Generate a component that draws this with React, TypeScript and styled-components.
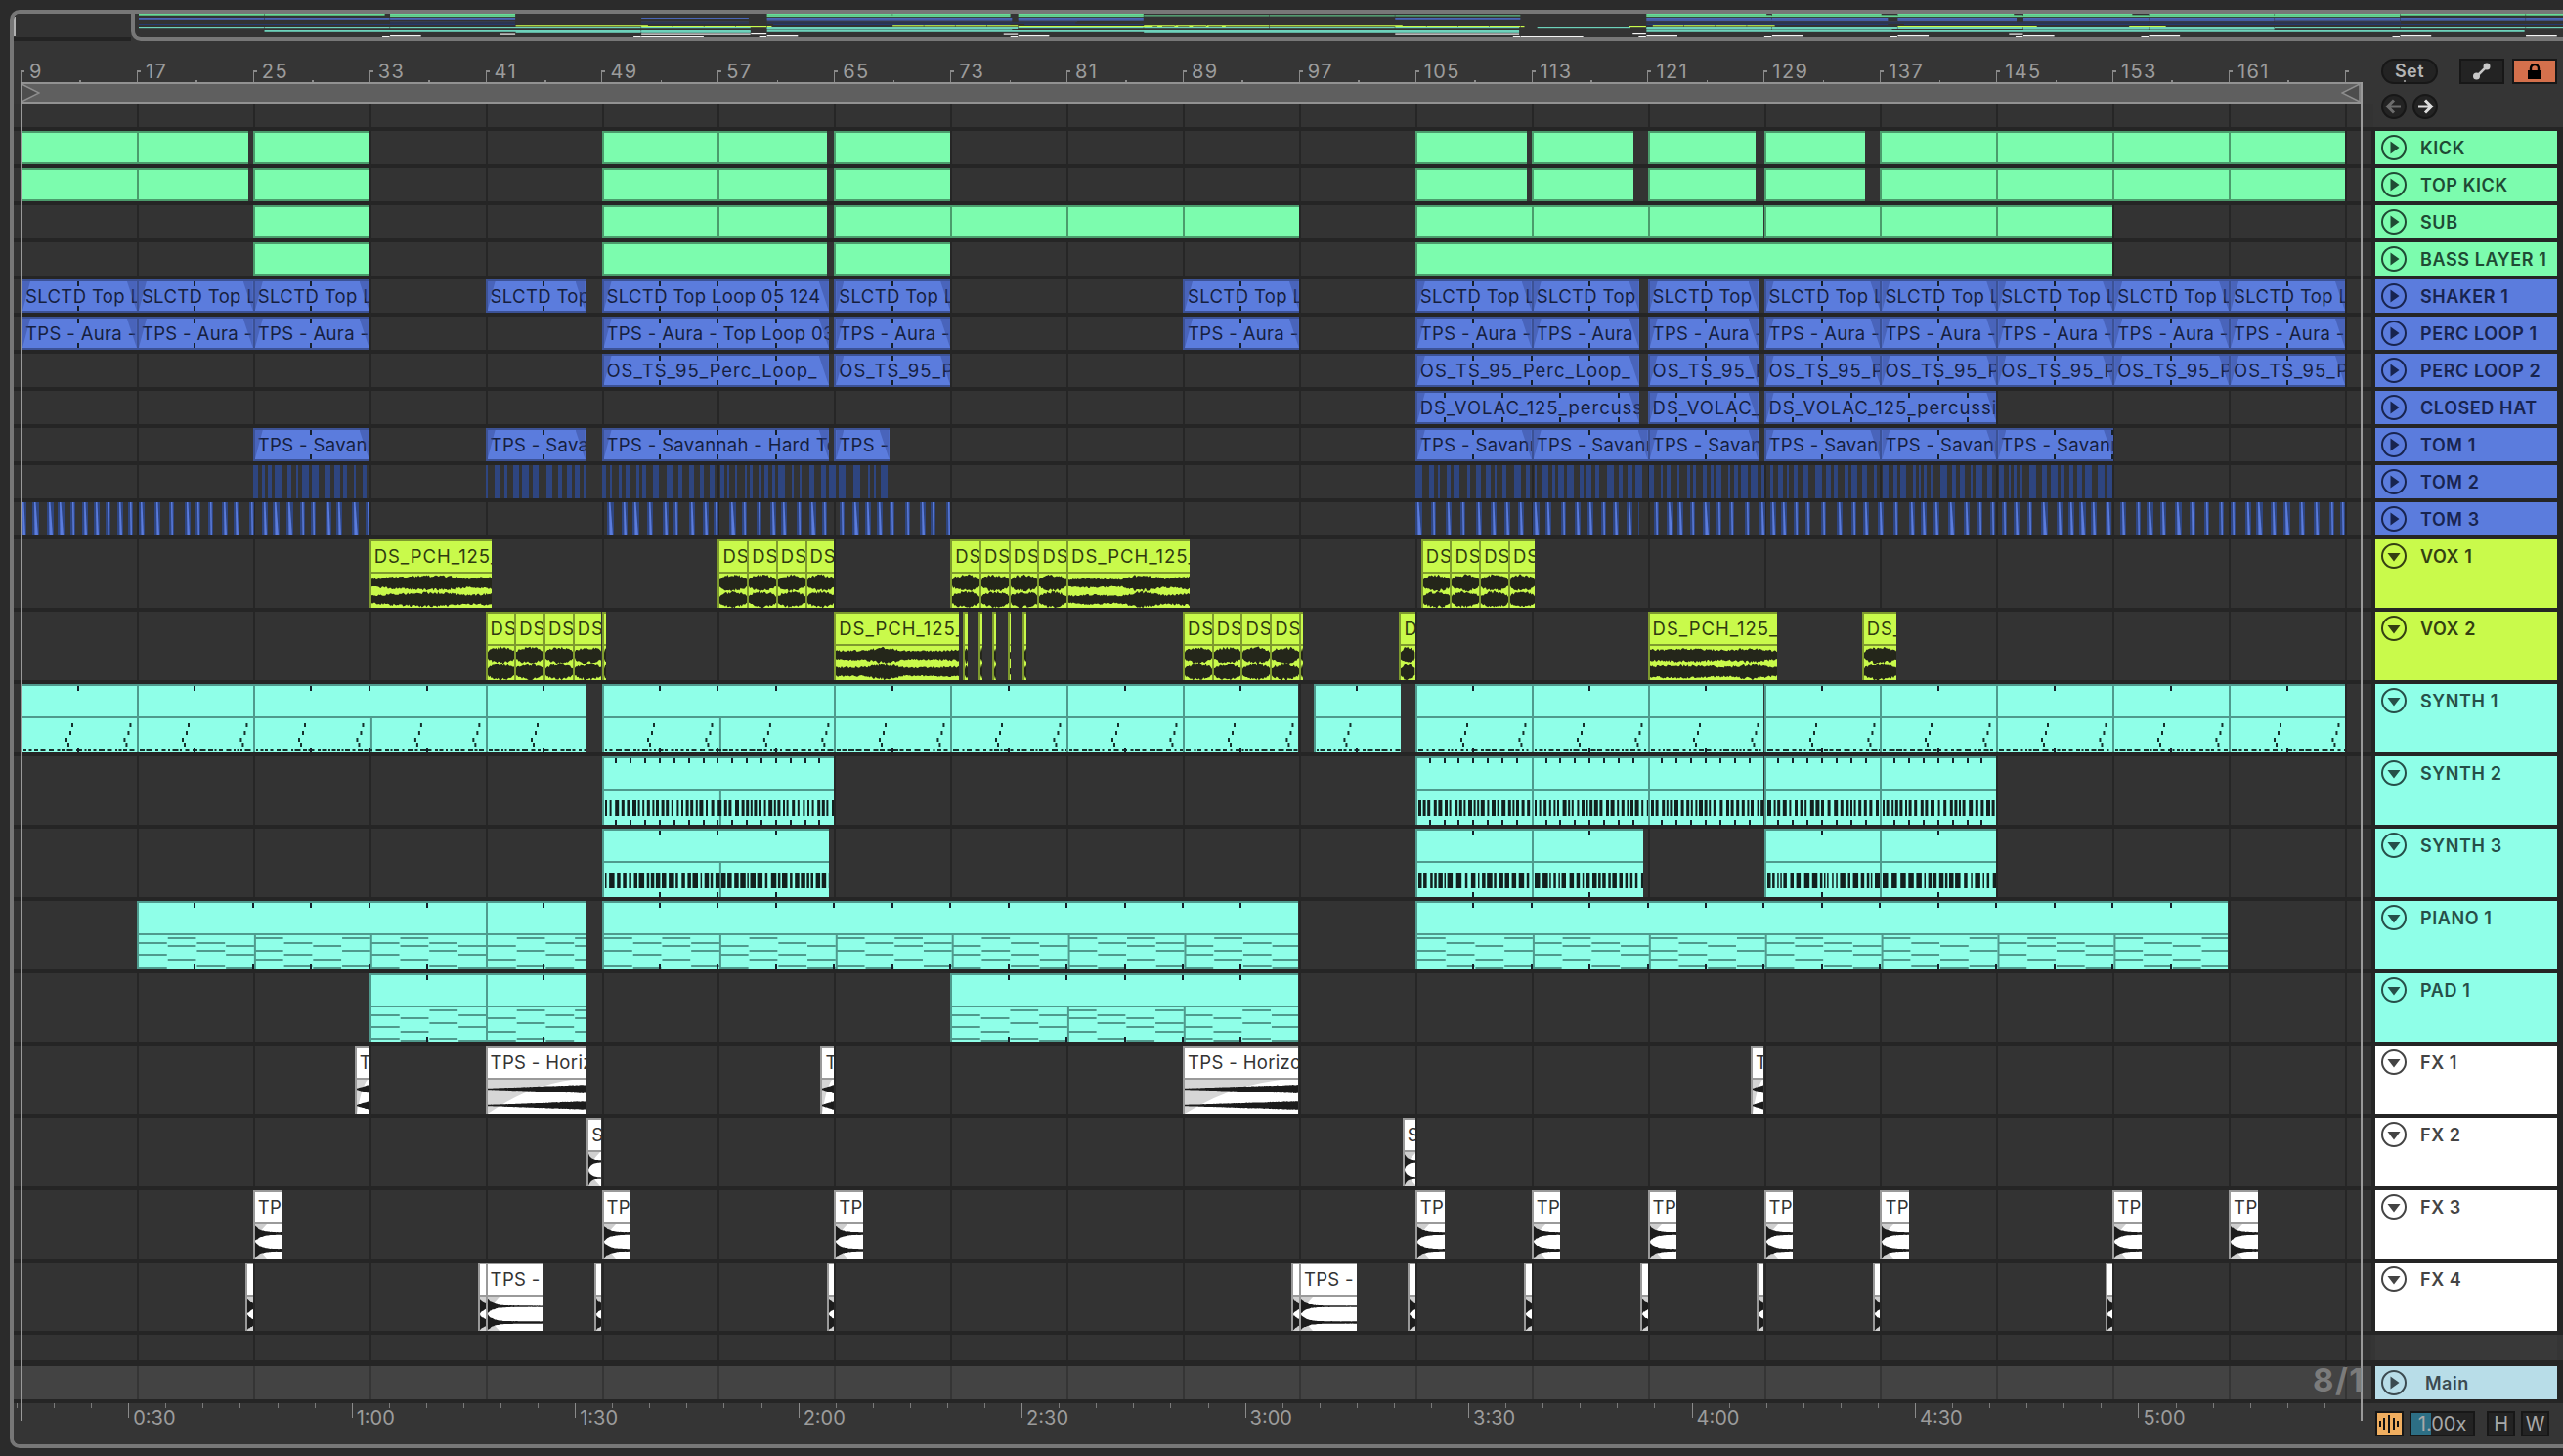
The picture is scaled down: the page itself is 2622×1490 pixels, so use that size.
import React from 'react';
import styled, { createGlobalStyle } from 'styled-components';

const BAR = 14.8625;
const FONT = `Inter, "Noto Sans", sans-serif`;
const laneX = (bar: number) => 7 + (bar - 9) * BAR;
const p = (v: number) => 9 + (v * 1.6722 - 21) / BAR;
const rp = (v: number) => 9 + (v - 21) / BAR;

type Tone = 'green' | 'blue' | 'yellow' | 'teal' | 'white' | 'tom2' | 'tom3';
type ClipDef = [number, number, string?];
type Body = 'none' | 'wave' | 'rise' | 'decay' | 'hit' | 'dots' | 'bars' | 'denseBars' | 'dashes';
interface Track {
  name: string;
  tone: Tone;
  tall?: boolean;
  body?: Body;
  clips: ClipDef[];
  tickStep?: number;
  tickOffset?: number;
}

const tones: Record<Tone, { fill: string; border: string; text: string; head: string; headText: string }> = {
  green: { fill: '#7cfcae', border: '#4b9c6c', text: '#1d3a2a', head: '#7cfcae', headText: '#1f4a34' },
  blue: { fill: '#5b7cdd', border: '#3c5296', text: '#161f3f', head: '#5b7cdd', headText: '#18244f' },
  yellow: { fill: '#c9fa4b', border: '#7e9a2e', text: '#2f3a10', head: '#c9fa4b', headText: '#343f12' },
  teal: { fill: '#8fffe8', border: '#4f9a8d', text: '#1f3f39', head: '#8fffe8', headText: '#264f49' },
  white: { fill: '#ffffff', border: '#9a9a9a', text: '#333333', head: '#ffffff', headText: '#444444' },
  tom2: { fill: 'transparent', border: 'transparent', text: '#000', head: '#5b7cdd', headText: '#18244f' },
  tom3: { fill: 'transparent', border: 'transparent', text: '#000', head: '#5b7cdd', headText: '#18244f' },
};

const seq = (from: number, to: number, title?: string, step = 8): ClipDef[] => {
  const out: ClipDef[] = [];
  for (let b = from; b < to; b += step) out.push([b, Math.min(b + step, to), title]);
  return out;
};

const SLC = 'SLCTD Top Loop 05 124';
const AUR = 'TPS - Aura - Top Loop 03';
const OST = 'OS_TS_95_Perc_Loop_';
const VOL = 'DS_VOLAC_125_percussion';
const SAV = 'TPS - Savannah - Hard Tom';
const PCH = 'DS_PCH_125_vox';
const HOR = 'TPS - Horizon';
const TPI = 'TPS - Impact';

const kickClips: ClipDef[] = [
  [9, 17], [17, p(152)], [25, 33], [49, 57], [57, p(506)], [65, 73], [105, p(934)], [113, p(999)],
  [121, p(1074)], [129, p(1141)], [137, 145], [145, 153], [153, 161], [161, 169],
];

const tracks: Track[] = [
  { name: 'KICK', tone: 'green', clips: kickClips },
  { name: 'TOP KICK', tone: 'green', clips: kickClips },
  { name: 'SUB', tone: 'green', clips: [[25, 33], [49, 57], [57, p(506)], [65, 73], [73, 81], [81, 89], [89, 97], ...seq(105, 153)] },
  { name: 'BASS LAYER 1', tone: 'green', clips: [[25, 33], [49, p(506)], [65, 73], [105, 153]] },
  {
    name: 'SHAKER 1', tone: 'blue',
    clips: [...seq(9, 33, SLC), [41, p(358), SLC], [49, p(507), SLC], [65, 73, SLC], [89, 97, SLC], [105, 113, SLC], [113, 120.4, SLC], [121, 128.6, SLC], ...seq(129, 169, SLC)],
  },
  {
    name: 'PERC LOOP 1', tone: 'blue',
    clips: [...seq(9, 33, AUR), [49, p(507), AUR], [65, 73, AUR], [89, 97, AUR], [105, 113, AUR], [113, 120.4, AUR], [121, 128.6, AUR], ...seq(129, 169, AUR)],
  },
  {
    name: 'PERC LOOP 2', tone: 'blue',
    clips: [[49, p(507), OST], [65, 73, OST], [105, 120.4, OST], [121, 128.6, OST], ...seq(129, 169, OST)],
  },
  { name: 'CLOSED HAT', tone: 'blue', tickOffset: 3, clips: [[105, 120.4, VOL], [121, 128.6, VOL], [129, 145, VOL]] },
  {
    name: 'TOM 1', tone: 'blue',
    clips: [[25, 33, SAV], [41, p(358), SAV], [49, p(507), SAV], [65, p(544), SAV], [105, 113, SAV], [113, 121, SAV], [121, 128.6, SAV], [129, 137, SAV], [137, 145, SAV], [145, p(1293), SAV]],
  },
  { name: 'TOM 2', tone: 'tom2', clips: [[25, 33], [41, p(358)], [49, p(543)], [105, p(1293)]] },
  { name: 'TOM 3', tone: 'tom3', clips: [[9, 33], [49.4, p(506)], [65.4, 73], [105, 120.4], [121.4, 169]] },
  {
    name: 'VOX 1', tone: 'yellow', tall: true, body: 'wave',
    clips: [[33, p(301), PCH], ...seq(57, 65, PCH, 2), ...seq(73, 81, PCH, 2), [81, p(728), PCH], ...seq(105.4, 113.2, PCH, 2)],
  },
  {
    name: 'VOX 2', tone: 'yellow', tall: true, body: 'wave',
    clips: [
      ...seq(41, p(371), PCH, 2), [65, rp(981), PCH], [rp(985), rp(990), PCH], [rp(1001), rp(1005), PCH], [rp(1015), rp(1019), PCH], [rp(1031), rp(1034), PCH], [rp(1046), rp(1050), PCH],
      ...seq(89, p(797), PCH, 2), [p(856), 105, PCH], [121, p(1087), PCH], [p(1139), p(1160), PCH],
    ],
  },
  {
    name: 'SYNTH 1', tone: 'teal', tall: true, body: 'dots',
    clips: [[9, 17], [17, 25], [25, 41], [41, p(359)], [49, 65], [65, 73], [73, 81], [81, 89], [89, p(794)], [p(804), p(857)], ...seq(105, 169)],
  },
  { name: 'SYNTH 2', tone: 'teal', tall: true, body: 'bars', tickStep: 1, clips: [[49, 65], ...seq(105, 145)] },
  { name: 'SYNTH 3', tone: 'teal', tall: true, body: 'denseBars', clips: [[49, p(507)], [105, 113], [113, p(1005)], [129, 137], [137, 145]] },
  { name: 'PIANO 1', tone: 'teal', tall: true, body: 'dashes', clips: [[17, 41], [41, p(359)], [49, p(794)], [105, p(1363)]] },
  { name: 'PAD 1', tone: 'teal', tall: true, body: 'dashes', clips: [[33, 41], [41, p(359)], [73, p(794)]] },
  {
    name: 'FX 1', tone: 'white', tall: true, body: 'rise',
    clips: [[p(217), 33, HOR], [41, p(359), HOR], [p(502), 65, HOR], [89, p(794), HOR], [p(1071), 129, HOR]],
  },
  { name: 'FX 2', tone: 'white', tall: true, body: 'hit', clips: [[p(359), 49, 'SFX'], [p(858), 105, 'SFX']] },
  {
    name: 'FX 3', tone: 'white', tall: true, body: 'decay',
    clips: [25, 49, 65, 105, 113, 121, 129, 137, 153, 161].map((b): ClipDef => [b, b + 2, TPI]),
  },
  {
    name: 'FX 4', tone: 'white', tall: true, body: 'decay',
    clips: [
      [24.5, 25], [40.5, 41], [41, 45, TPI], [48.5, 49], [64.5, 65], [96.5, 97], [97, 101, TPI], [104.5, 105], [112.5, 113], [120.5, 121], [128.5, 129], [136.5, 137], [152.5, 153],
    ],
  },
];

const rng = (seed: number) => {
  let s = (seed * 7919 + 17) % 2147483647;
  return () => {
    s = (s * 16807) % 2147483647;
    return s / 2147483647;
  };
};

const GlobalStyle = createGlobalStyle`
  html, body { margin: 0; padding: 0; background: #2b2b2b; }
  body { width: 2622px; height: 1490px; overflow: hidden; font-family: ${FONT}; }
`;

const Page = styled.div`
  width: 2622px;
  height: 1490px;
  box-sizing: border-box;
  padding: 10px 0 8px 10px;
  background: #2b2b2b;
`;

const Frame = styled.div`
  height: 100%;
  box-sizing: border-box;
  position: relative;
  display: flex;
  flex-direction: column;
  border: 4px solid #777777;
  border-right: 0;
  border-radius: 10px 0 0 10px;
  background: #353535;
  overflow: hidden;
`;

const OverviewRow = styled.div`
  height: 28px;
  flex: none;
  display: flex;
`;

const OverviewLeft = styled.div`
  width: 120px;
  flex: none;
  box-sizing: border-box;
  padding: 3px 0 1px;
  background: #323232;
  border-bottom: 4px solid #232323;
`;

const OverviewEdge = styled.div`
  width: 1.5px;
  height: 100%;
  background: #b0b0b0;
`;

const OverviewWindow = styled.div`
  flex: 1;
  box-sizing: border-box;
  border-left: 4px solid #777777;
  border-bottom: 4px solid #777777;
  border-bottom-left-radius: 10px;
  background: #333333;
  overflow: hidden;

  svg { display: block; }
`;

const TopSection = styled.div`
  height: 88px;
  flex: none;
  display: flex;
`;

const TimelineHead = styled.div`
  flex: 1;
  min-width: 0;
  display: flex;
  flex-direction: column;
`;

const BarRuler = styled.div`
  height: 42px;
  flex: none;
  display: flex;
  align-items: flex-end;
  padding-left: 7px;
  background: #353535;
`;

const BarCell = styled.div`
  width: ${BAR * 8}px;
  flex: none;
  height: 12px;
  box-sizing: border-box;
  position: relative;
  border-left: 1.5px solid #8a8a8a;

  &::before {
    content: '';
    position: absolute;
    left: 0;
    top: 0;
    width: 3px;
    height: 1.5px;
    background: #8a8a8a;
  }

  &::after {
    content: '';
    position: absolute;
    left: ${BAR * 4}px;
    bottom: 0;
    width: 1.5px;
    height: 2px;
    background: #8a8a8a;
  }
`;

const BarNumber = styled.span`
  position: absolute;
  left: 8px;
  bottom: 1px;
  font-size: 20px;
  letter-spacing: 1.4px;
  line-height: 20px;
  color: #9c9c9c;
`;

const LoopBar = styled.div`
  height: 22px;
  flex: none;
  box-sizing: border-box;
  margin: 0 13px 0 7px;
  display: flex;
  justify-content: space-between;
  background: #5f5f5f;
  border-top: 2px solid #929292;
  border-bottom: 2px solid #929292;

  svg { display: block; }
`;

const gridLines = (color: string) => `repeating-linear-gradient(
  90deg,
  transparent 0,
  transparent 7px,
  ${color} 7px,
  ${color} 9px,
  transparent 9px,
  transparent ${BAR * 8}px
)`;

const FillerLane = styled.div`
  height: 24px;
  flex: none;
  background-color: #333333;
  background-image: ${gridLines('#262626')};
`;

const ControlPanel = styled.div`
  width: 194px;
  flex: none;
  box-sizing: border-box;
  padding: 18px 6px 0 8px;
  display: flex;
  flex-direction: column;
  gap: 10px;
`;

const ControlLine = styled.div`
  display: flex;
  align-items: center;
  gap: 6px;
`;

const SetButton = styled.div`
  width: 58px;
  height: 26px;
  margin-right: 16px;
  box-sizing: border-box;
  border: 2px solid #171717;
  border-radius: 13px;
  background: #232323;
  color: #b4b4b4;
  font-size: 18px;
  font-weight: 600;
  letter-spacing: 0.5px;
  line-height: 22px;
  text-align: center;
`;

const SquareButton = styled.div<{ $on?: boolean }>`
  width: 46px;
  height: 26px;
  margin-left: ${(p) => (p.$on ? '2px' : '0')};
  box-sizing: border-box;
  display: flex;
  align-items: center;
  justify-content: center;
  border: 2px solid #171717;
  background: ${(p) => (p.$on ? '#d4704c' : '#232323')};
`;

const RoundButton = styled.div`
  width: 26px;
  height: 26px;
  box-sizing: border-box;
  display: flex;
  align-items: center;
  justify-content: center;
  border: 2px solid #171717;
  border-radius: 50%;
  background: #232323;
`;

const Separator = styled.div<{ $h: number }>`
  height: ${(p) => p.$h}px;
  flex: none;
  background: #252525;
`;

const Tracks = styled.div`
  display: flex;
  flex-direction: column;
  gap: 4px;
  flex: none;
  background: #252525;
`;

const TrackRow = styled.div<{ $h: number }>`
  height: ${(p) => p.$h}px;
  flex: none;
  display: flex;
  gap: 4px;
  padding-right: 6px;
  background: #252525;
`;

const Lane = styled.div<{ $main?: boolean }>`
  flex: 1;
  min-width: 0;
  position: relative;
  overflow: hidden;
  background-color: ${(p) => (p.$main ? '#434343' : '#333333')};
  background-image: ${(p) => gridLines(p.$main ? '#353535' : '#262626')};
`;

const Clip = styled.div<{ $tone: Tone; $tall?: boolean }>`
  position: absolute;
  top: 0;
  bottom: 0;
  box-sizing: border-box;
  display: flex;
  flex-direction: column;
  overflow: hidden;
  background: ${(p) => tones[p.$tone].fill};
  border-left: ${(p) => (p.$tone.startsWith('tom') ? '0' : `2px solid ${tones[p.$tone].border}`)};
  border-top: ${(p) => (p.$tone.startsWith('tom') ? '0' : `2px solid ${tones[p.$tone].border}`)};
  border-bottom: ${(p) => (p.$tall || p.$tone.startsWith('tom') ? '0' : `2px solid ${tones[p.$tone].border}`)};

  svg { display: block; }
`;

const ClipTitle = styled.div<{ $tone: Tone; $tall?: boolean; $wide?: boolean }>`
  flex: none;
  height: ${(p) => (p.$tall ? '31px' : '30px')};
  line-height: ${(p) => (p.$tall ? '31px' : '30px')};
  padding-left: 3px;
  font-size: 18.5px;
  letter-spacing: ${(p) => (p.$wide ? '0.95px' : '0.35px')};
  white-space: nowrap;
  overflow: hidden;
  color: ${(p) => tones[p.$tone].text};
`;

const ClipBodyBox = styled.div<{ $tone: Tone }>`
  flex: 1;
  min-height: 0;
  border-top: 2px solid ${(p) => tones[p.$tone].border};
  overflow: hidden;
`;

const Fade = styled.div<{ $side: 'left' | 'right' }>`
  position: absolute;
  top: 0;
  bottom: 0;
  ${(p) => p.$side}: 0;
  width: ${(p) => (p.$side === 'left' ? '8px' : '10px')};
  background: rgba(52, 72, 146, 0.45);
  clip-path: ${(p) => (p.$side === 'left' ? 'polygon(0 0, 100% 0, 0 100%)' : 'polygon(0 0, 100% 100%, 100% 0)')};
`;

const Tick = styled.div<{ $pos: 'top' | 'bottom' }>`
  position: absolute;
  ${(p) => p.$pos}: 0;
  width: 2px;
  height: 5px;
  background: #16202a;
`;

const TrackHeader = styled.div<{ $tone: Tone }>`
  width: 186px;
  flex: none;
  box-sizing: border-box;
  padding: 4px 0 0 6px;
  display: flex;
  gap: 14px;
  background: ${(p) => tones[p.$tone].head};
  color: ${(p) => tones[p.$tone].headText};

  svg { flex: none; display: block; }
`;

const TrackName = styled.span`
  font-size: 18px;
  font-weight: 600;
  letter-spacing: 0.6px;
  line-height: 27px;
  white-space: nowrap;
`;

const FillerRow = styled.div`
  height: 26px;
  flex: none;
  display: flex;
  gap: 4px;
  padding-right: 6px;
`;

const FillerHeader = styled.div`
  width: 186px;
  flex: none;
  background: #393939;
`;

const MainHeader = styled.div`
  width: 186px;
  flex: none;
  box-sizing: border-box;
  padding: 4px 0 0 6px;
  display: flex;
  gap: 19px;
  background: #b8dde8;
  color: #3c4a50;
`;

const MainName = styled.span`
  font-size: 18px;
  font-weight: 600;
  letter-spacing: 0.5px;
  line-height: 27px;
`;

const BottomBar = styled.div`
  height: 42px;
  flex: none;
  display: flex;
  background: #353535;
`;

const TimeRuler = styled.div`
  flex: 1;
  min-width: 0;
  display: flex;
  padding-left: 3px;
  overflow: hidden;
`;

const TimeCell = styled.div<{ $major: boolean }>`
  width: 38.08px;
  flex: none;
  height: ${(p) => (p.$major ? '15px' : '5px')};
  box-sizing: border-box;
  position: relative;
  border-left: 1.5px solid ${(p) => (p.$major ? '#8a8a8a' : '#7a7a7a')};
`;

const TimeLabel = styled.span`
  position: absolute;
  left: 4px;
  top: 5px;
  font-size: 20px;
  line-height: 20px;
  color: #9c9c9c;
`;

const BottomControls = styled.div`
  width: 192px;
  flex: none;
  box-sizing: border-box;
  padding: 8px 8px 0 0;
  display: flex;
  align-items: flex-start;
`;

const OrangeButton = styled.div`
  width: 30px;
  height: 26px;
  box-sizing: border-box;
  display: flex;
  align-items: center;
  justify-content: center;
  border: 2px solid #171717;
  background: #f0ae60;
  margin-right: 6px;
`;

const SpeedBox = styled.div`
  width: 70px;
  height: 26px;
  box-sizing: border-box;
  border: 2px solid #171717;
  background: #232323;
  position: relative;
  margin-right: 12px;
  display: flex;
  align-items: center;
  justify-content: center;
  color: #a8a8a8;
  font-size: 20px;
  line-height: 22px;
`;

const SpeedFill = styled.div`
  position: absolute;
  left: 0;
  top: 0;
  bottom: 0;
  width: 20px;
  background: #2d6f85;
`;

const SpeedText = styled.span`
  position: relative;
`;

const KeyButton = styled.div`
  width: 30px;
  height: 26px;
  box-sizing: border-box;
  border: 2px solid #171717;
  background: #232323;
  margin-right: 6px;
  color: #a8a8a8;
  font-size: 20px;
  line-height: 22px;
  text-align: center;
`;

const LoopLine = styled.div<{ $x: number }>`
  position: absolute;
  left: ${(p) => p.$x}px;
  top: 70px;
  height: 1370px;
  width: 1.5px;
  background: #9a9a9a;
`;

const Signature = styled.div`
  position: absolute;
  right: 203px;
  top: 1381px;
  font-size: 33px;
  letter-spacing: 1.5px;
  line-height: 34px;
  font-weight: 700;
  color: #7b7b7b;
`;

/* ---------- drawings ---------- */

const FoldIcon: React.FC<{ open?: boolean }> = ({ open }) => (
  <svg width="26" height="26" viewBox="0 0 26 26">
    <circle cx="13" cy="13" r="12" fill="none" stroke="currentColor" strokeWidth="2" />
    {open ? <path d="M6.5 10H19.5L13 18.5Z" fill="currentColor" /> : <path d="M9.5 6.5L18.5 13L9.5 19.5Z" fill="currentColor" />}
  </svg>
);

const ExpandIcon = () => (
  <svg width="24" height="20" viewBox="0 0 24 20">
    <path d="M7 15L17 5" stroke="#c8c8c8" strokeWidth="2.5" />
    <circle cx="6.5" cy="15" r="3.5" fill="#c8c8c8" />
    <circle cx="17" cy="5" r="3.5" fill="#c8c8c8" />
  </svg>
);

const LockIcon = () => (
  <svg width="16" height="16" viewBox="0 0 16 16">
    <path d="M4 7V5a4 4 0 0 1 8 0v2" fill="none" stroke="#000" strokeWidth="2.4" />
    <rect x="1" y="7" width="14" height="9" fill="#000" />
  </svg>
);

const ArrowIcon: React.FC<{ dir: 'left' | 'right' }> = ({ dir }) => (
  <svg width="18" height="16" viewBox="0 0 18 16">
    <path
      d={dir === 'left' ? 'M9 1.5L2.5 8L9 14.5M3 8H16' : 'M9 1.5L15.5 8L9 14.5M15 8H2'}
      fill="none"
      stroke={dir === 'left' ? '#6c6c6c' : '#dcdcdc'}
      strokeWidth="3"
    />
  </svg>
);

const WaveButtonIcon = () => (
  <svg width="20" height="18" viewBox="0 0 20 18">
    <path d="M1 6V12M5 3V15M10 0V18M15 3V15M19 6V12" stroke="#111" strokeWidth="2" />
  </svg>
);

const LoopMarker: React.FC<{ flip?: boolean }> = ({ flip }) => (
  <svg width="20" height="18" viewBox="0 0 20 18">
    <path d={flip ? 'M19 0L1 9L19 18Z' : 'M1 0L19 9L1 18Z'} fill="#4d4d4d" stroke="#8e8e8e" strokeWidth="1.5" />
  </svg>
);

const envPath = (w: number, cy: number, maxA: number, env: (t: number) => number, seed: number, jitter = 0.3) => {
  const r = rng(seed);
  const top: string[] = [];
  const bottom: string[] = [];
  const step = 1.2;
  for (let x = 0; x <= w + step; x += step) {
    const a = Math.max(0.6, maxA * env(x / Math.max(w, 1)) * (1 - jitter + jitter * 1.3 * r()));
    const b = Math.max(0.6, maxA * env(x / Math.max(w, 1)) * (1 - jitter + jitter * 1.3 * r()));
    top.push(`${x.toFixed(1)} ${(cy - a).toFixed(1)}`);
    bottom.unshift(`${x.toFixed(1)} ${(cy + b).toFixed(1)}`);
  }
  return `M${top.join('L')}L${bottom.join('L')}Z`;
};

const WaveBody: React.FC<{ w: number; kind: Body; seed: number; tone: Tone }> = ({ w, kind, seed, tone }) => {
  const color = tone === 'yellow' ? '#24261a' : '#1c1c1c';
  let env: (t: number) => number = () => 1;
  if (kind === 'wave') {
    if (w > 60) {
      const r = rng(seed + 11);
      const count = Math.round(w / 26);
      const levels = Array.from({ length: count + 1 }, () => 0.5 + 0.55 * r());
      env = (t) => {
        const f = t * count;
        const i = Math.floor(f);
        const k = f - i;
        const a = levels[Math.min(i, count)];
        const b = levels[Math.min(i + 1, count)];
        return a + (b - a) * k * k * (3 - 2 * k);
      };
    } else {
      env = (t) => 0.45 + 0.6 * Math.pow(Math.sin(Math.PI * Math.min(t, 1)), 0.6);
    }
  } else if (kind === 'rise') {
    env = (t) => 0.16 + 0.84 * t;
  } else if (kind === 'decay') {
    env = (t) => 0.16 + 0.84 * Math.exp(-(t * w) / 6);
  } else if (kind === 'hit') {
    env = (t) => 0.14 + 0.86 * Math.exp(-(t * w) / 3);
  }
  const isWhite = tone === 'white';
  const amp = kind === 'rise' ? 4.5 : 8;
  const jitter = isWhite ? 0.12 : 0.3;
  return (
    <svg width={w} height={35} viewBox={`0 0 ${w} 35`}>
      {isWhite && kind !== 'rise' && <path d={`M0 0H12Q3 9 0 17Q3 26 12 35H0Z`} fill="#cfcfcf" />}
      {isWhite && kind === 'rise' && <path d={`M0 35Q${w * 0.4} 6 ${w * 0.85} 0H0Z`} fill="#d6d6d6" />}
      <path d={envPath(w, 9.5, amp, env, seed, jitter)} fill={color} />
      <path d={envPath(w, 26.5, amp, env, seed + 3, jitter)} fill={color} />
    </svg>
  );
};

const MidiBody: React.FC<{ w: number; kind: Body; seed: number; startBar: number }> = ({ w, kind, seed, startBar }) => {
  const r = rng(seed);
  const items: React.ReactNode[] = [];
  const lines: React.ReactNode[] = [];
  const firstGrid = Math.ceil((startBar - 1) / 8) * 8 + 1;
  for (let b = firstGrid; (b - startBar) * BAR < w; b += 8) {
    if (b > startBar) lines.push(<rect key={`l${b}`} x={(b - startBar) * BAR - 1} y={0} width={2} height={37} fill="#4f9a8d" />);
  }
  if (kind === 'dots') {
    for (let x = 0; x < w; x += 59.45) {
      const ox = x + 44 - ((startBar - 1) % 4) * BAR;
      [[6, 5], [4, 13], [0, 20], [2, 25]].forEach(([dx, y], i) =>
        items.push(<rect key={`s${x}${i}`} x={ox + dx} y={y} width={2} height={4} fill="#16302c" />),
      );
    }
    for (let x = 1; x < w; ) {
      const n = 2 + Math.floor(r() * 5);
      items.push(<rect key={`d${x}`} x={x} y={31} width={n} height={3} fill="#16302c" />);
      x += n + 1.5 + Math.floor(r() * 3);
    }
  }
  if (kind === 'bars' || kind === 'denseBars') {
    for (let x = 1; x < w; ) {
      const n = kind === 'bars' ? 2 + Math.floor(r() * 2.4) : 1.5 + Math.floor(r() * 5);
      items.push(<rect key={`b${x}`} x={x} y={10} width={n} height={16} fill="#12201e" />);
      x += n + 1.6 + Math.floor(r() * 2.5);
    }
  }
  if (kind === 'dashes') {
    const rows = [2, 7, 10, 15, 19, 24, 31, 33];
    const offset = ((startBar - 1) % 2) * BAR;
    let i = Math.floor((startBar * 7) % 5);
    for (let x = -offset; x < w; x += 2 * BAR, i++) {
      [0, 3, 5].forEach((k) => {
        const y = rows[(i + k) % rows.length];
        items.push(<rect key={`n${x}${k}`} x={x} y={y} width={BAR * 2 - 1} height={2} fill="#4f9a8d" />);
      });
    }
  }
  return (
    <svg width={w} height={37} viewBox={`0 0 ${w} 37`}>
      {lines}
      {items}
    </svg>
  );
};

const Tom2Body: React.FC<{ w: number; seed: number }> = ({ w, seed }) => {
  const r = rng(seed);
  const items: React.ReactNode[] = [];
  for (let x = 0; x < w; ) {
    const n = 2 + Math.floor(r() * 6);
    items.push(<rect key={x} x={x} y={0} width={n} height={34} fill="#2e4580" />);
    x += n + 3 + Math.floor(r() * 6);
  }
  return <svg width={w} height={34} viewBox={`0 0 ${w} 34`}>{items}</svg>;
};

const Tom3Body: React.FC<{ w: number; seed: number }> = ({ w, seed }) => {
  const r = rng(seed);
  const items: React.ReactNode[] = [];
  for (let x = 0; x < w; ) {
    const n = 5 + Math.floor(r() * 2.5);
    items.push(
      <g key={x}>
        <rect x={x} y={0} width={n} height={34} fill="#2e4580" />
        <path d={`M${x + 2} 0H${x + 3.5}L${x + n - 1} 34H${x + 2.5}Z`} fill="#5b7cdd" />
      </g>,
    );
    x += 11 + Math.floor(r() * 6);
  }
  return <svg width={w} height={34} viewBox={`0 0 ${w} 34`}>{items}</svg>;
};

const ClipView: React.FC<{ def: ClipDef; track: Track; seed: number }> = ({ def, track, seed }) => {
  const [start, end, title] = def;
  const left = laneX(start);
  const w = (end - start) * BAR;
  const inner = Math.max(w - 2, 1);
  const tone = track.tone;
  const ticks: number[] = [];
  const tickStep = track.tickStep ?? 4;
  const offset = track.tickOffset ?? 1;
  if (tone === 'blue' || tone === 'teal') {
    for (let b = Math.ceil(start); b < end; b++) {
      if (b > start + 0.3 && ((b - offset) % tickStep + tickStep) % tickStep === 0) ticks.push((b - start) * BAR - 3);
    }
  }
  return (
    <Clip $tone={tone} $tall={track.tall} style={{ left, width: w }}>
      {tone === 'tom2' && <Tom2Body w={w} seed={seed} />}
      {tone === 'tom3' && <Tom3Body w={w} seed={seed} />}
      {tone !== 'tom2' && tone !== 'tom3' && tone !== 'green' && (
        <ClipTitle $tone={tone} $tall={track.tall} $wide={title?.includes('_')}>
          {title ?? ''}
        </ClipTitle>
      )}
      {track.tall && (
        <ClipBodyBox $tone={tone}>
          {tone === 'teal' ? (
            <MidiBody w={inner} kind={track.body ?? 'none'} seed={seed} startBar={start} />
          ) : (
            <WaveBody w={inner} kind={track.body ?? 'wave'} seed={seed} tone={tone} />
          )}
        </ClipBodyBox>
      )}
      {tone === 'blue' && <Fade $side="left" />}
      {tone === 'blue' && <Fade $side="right" />}
      {ticks.map((x) => (
        <React.Fragment key={x}>
          <Tick $pos="top" style={{ left: x }} />
          <Tick $pos="bottom" style={{ left: x }} />
        </React.Fragment>
      ))}
    </Clip>
  );
};

const overviewY = [0, 0.7, 1.4, 2.1, 4, 4.8, 5.6, 6.4, 7.2, 9.5, 11, 12.2, 13, 14, 14.8, 15.4, 17, 18, 20.5, 20, 22, 23];
const overviewH = [1, 1, 1, 1, 1, 1, 1, 1, 1, 1, 1, 1.2, 1.2, 1.2, 1.2, 1.2, 1.8, 1.8, 1.2, 1.2, 1.4, 1.4];
const overviewColor: Record<Tone, string> = {
  green: '#67dd97',
  blue: '#4a66b8',
  yellow: '#c9fa4b',
  teal: '#6dd2bb',
  white: '#f4f4f4',
  tom2: '#26396f',
  tom3: '#26396f',
};

const Overview = () => (
  <svg width="2484" height="24" viewBox="0 0 2484 24">
    {tracks.map((t, i) =>
      t.clips.map((c, j) => (
        <rect
          key={`${i}-${j}`}
          x={4 + (c[0] - 9) * BAR * 1.081}
          y={overviewY[i]}
          width={Math.max((c[1] - c[0]) * BAR * 1.081 - 0.5, 1)}
          height={overviewH[i]}
          fill={overviewColor[t.tone]}
        />
      )),
    )}
  </svg>
);

const barNumbers = Array.from({ length: 21 }, (_, i) => 9 + i * 8);
const timeCells = Array.from({ length: 63 }, (_, i) => i);
const timeLabels: Record<number, string> = {
  3: '0:30', 9: '1:00', 15: '1:30', 21: '2:00', 27: '2:30', 33: '3:00', 39: '3:30', 45: '4:00', 51: '4:30', 57: '5:00',
};

export default function App() {
  return (
    <Page>
      <GlobalStyle />
      <Frame>
        <OverviewRow>
          <OverviewLeft>
            <OverviewEdge />
          </OverviewLeft>
          <OverviewWindow>
            <Overview />
          </OverviewWindow>
        </OverviewRow>
        <TopSection>
          <TimelineHead>
            <BarRuler>
              {barNumbers.map((n) => (
                <BarCell key={n}>{n < 169 && <BarNumber>{n}</BarNumber>}</BarCell>
              ))}
            </BarRuler>
            <LoopBar>
              <LoopMarker />
              <LoopMarker flip />
            </LoopBar>
            <FillerLane />
          </TimelineHead>
          <ControlPanel>
            <ControlLine>
              <SetButton>Set</SetButton>
              <SquareButton>
                <ExpandIcon />
              </SquareButton>
              <SquareButton $on>
                <LockIcon />
              </SquareButton>
            </ControlLine>
            <ControlLine>
              <RoundButton>
                <ArrowIcon dir="left" />
              </RoundButton>
              <RoundButton>
                <ArrowIcon dir="right" />
              </RoundButton>
            </ControlLine>
          </ControlPanel>
        </TopSection>
        <Separator $h={4} />
        <Tracks>
          {tracks.map((t, i) => (
            <TrackRow key={t.name} $h={t.tall ? 70 : 34}>
              <Lane>
                {t.clips.map((c, j) => (
                  <ClipView key={j} def={c} track={t} seed={i * 31 + j * 7 + 5} />
                ))}
              </Lane>
              <TrackHeader $tone={t.tone}>
                <FoldIcon open={t.tall} />
                <TrackName>{t.name}</TrackName>
              </TrackHeader>
            </TrackRow>
          ))}
        </Tracks>
        <Separator $h={4} />
        <FillerRow>
          <Lane />
          <FillerHeader />
        </FillerRow>
        <Separator $h={6} />
        <TrackRow $h={34}>
          <Lane $main />
          <MainHeader>
            <FoldIcon />
            <MainName>Main</MainName>
          </MainHeader>
        </TrackRow>
        <Separator $h={4} />
        <BottomBar>
          <TimeRuler>
            {timeCells.map((i) => (
              <TimeCell key={i} $major={i in timeLabels}>
                {timeLabels[i] && <TimeLabel>{timeLabels[i]}</TimeLabel>}
              </TimeCell>
            ))}
          </TimeRuler>
          <BottomControls>
            <OrangeButton>
              <WaveButtonIcon />
            </OrangeButton>
            <SpeedBox>
              <SpeedFill />
              <SpeedText>1.00x</SpeedText>
            </SpeedBox>
            <KeyButton>H</KeyButton>
            <KeyButton>W</KeyButton>
          </BottomControls>
        </BottomBar>
        <LoopLine $x={7} />
        <LoopLine $x={2401} />
        <Signature>8/1</Signature>
      </Frame>
    </Page>
  );
}
